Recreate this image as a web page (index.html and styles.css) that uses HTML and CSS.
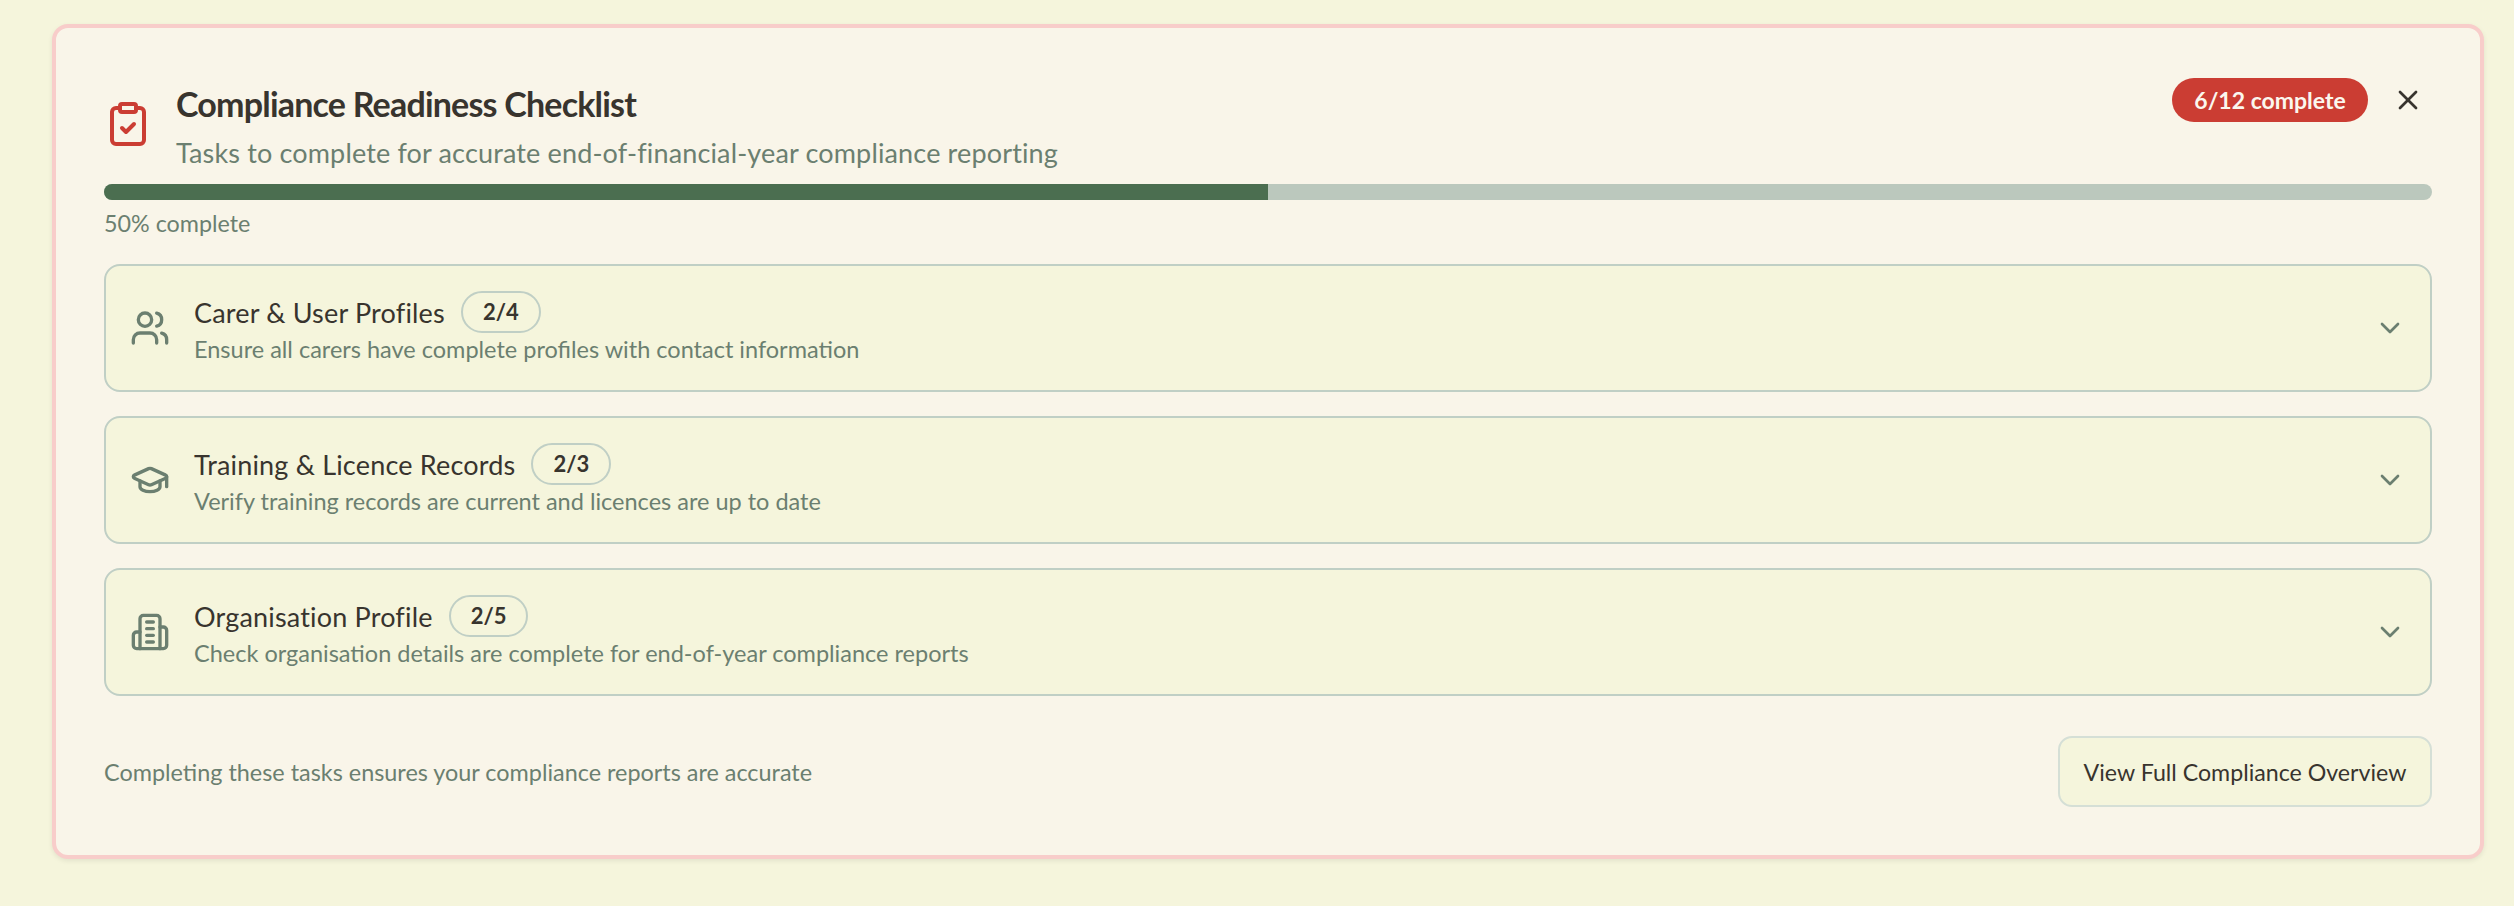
FILE: index.html
```html
<!DOCTYPE html>
<html lang="en">
<head>
  <meta charset="UTF-8">
  <meta name="viewport" content="width=device-width, initial-scale=1.0">
  <title>Compliance Readiness Checklist</title>
  <link rel="stylesheet" href="styles.css">
</head>
<body>

  <main class="card">

    <!-- Header -->
    <header class="card-head">
      <svg class="icon icon-head" viewBox="0 0 24 24">
        <rect x="8" y="2" width="8" height="4" rx="1"/>
        <path d="M16 4h2a2 2 0 0 1 2 2v14a2 2 0 0 1-2 2H6a2 2 0 0 1-2-2V6a2 2 0 0 1 2-2h2"/>
        <path d="m9 14 2 2 4-4"/>
      </svg>
      <div class="head-text">
        <h1>Compliance Readiness Checklist</h1>
        <p>Tasks to complete for accurate end-of-financial-year compliance reporting</p>
      </div>
      <div class="head-actions">
        <span class="status-pill">6/12 complete</span>
        <button class="close-btn" aria-label="Close">
          <svg class="icon icon-row" viewBox="0 0 24 24"><path d="M18 6 6 18"/><path d="m6 6 12 12"/></svg>
        </button>
      </div>
    </header>

    <!-- Progress -->
    <div class="progress"><div class="progress-fill"></div></div>
    <div class="progress-label">50% complete</div>

    <!-- Sections -->
    <section class="rows">
      <div class="row">
        <svg class="icon icon-section" viewBox="0 0 24 24">
          <path d="M16 21v-2a4 4 0 0 0-4-4H6a4 4 0 0 0-4 4v2"/>
          <circle cx="9" cy="7" r="4"/>
          <path d="M22 21v-2a4 4 0 0 0-3-3.87"/>
          <path d="M16 3.13a4 4 0 0 1 0 7.75"/>
        </svg>
        <div class="row-text">
          <div class="row-title"><h2>Carer &amp; User Profiles</h2><span class="count">2/4</span></div>
          <p>Ensure all carers have complete profiles with contact information</p>
        </div>
        <svg class="icon icon-chevron" viewBox="0 0 24 24"><path d="m6 9 6 6 6-6"/></svg>
      </div>

      <div class="row">
        <svg class="icon icon-section" viewBox="0 0 24 24">
          <path d="M21.42 10.922a1 1 0 0 0-.019-1.838L12.83 5.18a2 2 0 0 0-1.66 0L2.6 9.08a1 1 0 0 0 0 1.832l8.57 3.908a2 2 0 0 0 1.66 0z"/>
          <path d="M22 10v6"/>
          <path d="M6 12.5V16a6 3 0 0 0 12 0v-3.5"/>
        </svg>
        <div class="row-text">
          <div class="row-title"><h2>Training &amp; Licence Records</h2><span class="count">2/3</span></div>
          <p>Verify training records are current and licences are up to date</p>
        </div>
        <svg class="icon icon-chevron" viewBox="0 0 24 24"><path d="m6 9 6 6 6-6"/></svg>
      </div>

      <div class="row">
        <svg class="icon icon-section" viewBox="0 0 24 24">
          <path d="M6 22V4a2 2 0 0 1 2-2h8a2 2 0 0 1 2 2v18Z"/>
          <path d="M6 12H4a2 2 0 0 0-2 2v6a2 2 0 0 0 2 2h2"/>
          <path d="M18 9h2a2 2 0 0 1 2 2v9a2 2 0 0 1-2 2h-2"/>
          <path d="M10 6h4"/><path d="M10 10h4"/><path d="M10 14h4"/><path d="M10 18h4"/>
        </svg>
        <div class="row-text">
          <div class="row-title"><h2>Organisation Profile</h2><span class="count">2/5</span></div>
          <p>Check organisation details are complete for end-of-year compliance reports</p>
        </div>
        <svg class="icon icon-chevron" viewBox="0 0 24 24"><path d="m6 9 6 6 6-6"/></svg>
      </div>
    </section>

    <!-- Footer -->
    <footer class="card-foot">
      <span>Completing these tasks ensures your compliance reports are accurate</span>
      <button class="overview-btn">View Full Compliance Overview</button>
    </footer>

  </main>

</body>
</html>
```

FILE: styles.css
```css
* {
  margin: 0;
  padding: 0;
  box-sizing: border-box;
}

body {
  font-family: Lato, sans-serif;
  background-color: #f5f5dc;
  color: #38342e;
  padding: 24px 30px 47px 52px;
}

.card {
  height: 835px;
  background-color: #f9f5e9;
  border: 4px solid #f8cdca;
  border-radius: 16px;
  box-shadow: 0 2px 5px rgba(0, 0, 0, 0.08);
  padding: 48px 48px 0 48px;
}

.icon {
  fill: none;
  stroke: currentColor;
  stroke-width: 2;
  stroke-linecap: round;
  stroke-linejoin: round;
  flex-shrink: 0;
}

.card-head {
  display: flex;
  align-items: flex-start;
  gap: 24px;
  height: 108px;
}

.icon-head {
  width: 48px;
  height: 48px;
  color: #cb3d33;
  margin-top: 24px;
}

.head-text {
  flex: 1;
}

.head-text h1 {
  font-size: 34px;
  line-height: 44px;
  font-weight: 700;
  letter-spacing: -0.8px;
  margin-top: 6px;
}

.head-text p {
  font-size: 27px;
  line-height: 36px;
  letter-spacing: 0.15px;
  color: #6b7f70;
  margin-top: 9px;
}

.head-actions {
  display: flex;
  align-items: center;
  gap: 24px;
  padding-right: 8px;
  margin-top: 2px;
}

.status-pill {
  height: 44px;
  width: 196px;
  border-radius: 22px;
  background-color: #cb3d33;
  color: #fbf7ee;
  font-size: 23px;
  font-weight: 700;
  display: flex;
  align-items: center;
  justify-content: center;
}

.close-btn {
  width: 32px;
  height: 32px;
  background: transparent;
  border: none;
  color: #38342e;
}

.icon-row {
  width: 32px;
  height: 32px;
  display: block;
}

.progress {
  height: 16px;
  border-radius: 8px;
  background-color: #bbc8bd;
  overflow: hidden;
}

.progress-fill {
  width: 50%;
  height: 100%;
  background-color: #4b6e50;
}

.progress-label {
  font-size: 23.3px;
  line-height: 32px;
  color: #6b7f70;
  margin-top: 7px;
}

.rows {
  display: flex;
  flex-direction: column;
  gap: 24px;
  margin-top: 25px;
}

.row {
  height: 128px;
  display: flex;
  align-items: center;
  gap: 24px;
  padding: 0 24px;
  background-color: #f5f5dc;
  border: 2px solid #c0cfc5;
  border-radius: 16px;
}

.icon-section {
  width: 40px;
  height: 40px;
  color: #6b7f70;
}

.row-text {
  flex: 1;
}

.row-title {
  display: flex;
  align-items: center;
  gap: 16px;
}

.row-title h2 {
  font-size: 27px;
  line-height: 36px;
  font-weight: 400;
  letter-spacing: 0.18px;
  padding-top: 2px;
}

.count {
  height: 42px;
  padding: 0 20px;
  border: 2px solid #c0cfc5;
  border-radius: 21px;
  font-size: 22px;
  font-weight: 700;
  line-height: 38px;
}

.row-text p {
  font-size: 23.5px;
  line-height: 32px;
  color: #6b7f70;
}

.icon-chevron {
  width: 32px;
  height: 32px;
  color: #6b7f70;
}

.card-foot {
  display: flex;
  align-items: center;
  justify-content: space-between;
  margin-top: 40px;
  font-size: 23.4px;
  color: #6b7f70;
}

.overview-btn {
  height: 71px;
  width: 374px;
  background-color: #f5f5dc;
  border: 2px solid #d5dfd6;
  border-radius: 14px;
  font-family: inherit;
  font-size: 23.2px;
  color: #38342e;
}
```
